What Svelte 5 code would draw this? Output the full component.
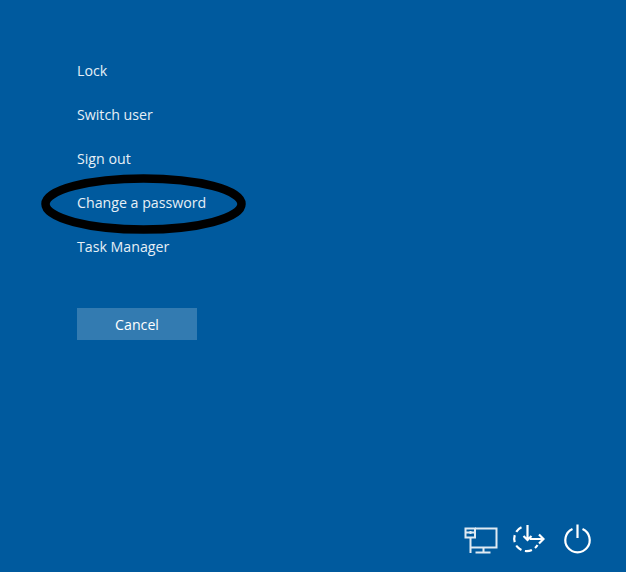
<script>
	const options = ['Lock', 'Switch user', 'Sign out', 'Change a password', 'Task Manager'];
</script>

<div class="screen">
	<nav class="menu">
		{#each options as label (label)}
			<a class="option" href="#top">{label}</a>
		{/each}
		<button class="cancel">Cancel</button>
	</nav>

	<!-- hand drawn annotation around the password option -->
	<svg class="circle" viewBox="0 0 205 60" fill="none" stroke="#000" stroke-width="8.500">
		<ellipse cx="102.500" cy="30" rx="98" ry="25.500" />
	</svg>

	<div class="tray">
		<svg class="net" viewBox="0 0 34 32" fill="none" stroke="#dfeaf3" stroke-width="2">
			<path d="M11 4.500H32.500V23.500H6.500" />
			<path d="M1.500 4.500h9.500v9H1.500zM1.500 8.500h9.500M6.500 7v3M6.500 13.500V29M19.500 23.500v5M11.500 28.500h15" />
		</svg>
		<svg class="ease" viewBox="0 0 33 32" fill="none" stroke="#fff" stroke-width="2.200">
			<path d="M9.500 3.300A12.500 12.500 0 1 0 25.500 21" stroke-dasharray="7 3.600" />
			<path d="M15.500 1v15M11.500 12l4 4 4-4M18 15H31M27 10.500l4.500 4.500-4.500 4.500" />
		</svg>
		<svg class="power" viewBox="0 0 29 32" fill="none" stroke="#fff" stroke-width="2.200">
			<path d="M14.500 0.500V14" />
			<path d="M9.500 5A12.200 12.200 0 1 0 19.500 5" />
		</svg>
	</div>
</div>

<style>
	:global(body) {
		margin: 0;
	}

	.screen {
		position: relative;
		display: flex;
		flex-direction: column;
		box-sizing: border-box;
		height: 572px;
		padding: 49px 34px 16px 77px;
		background: #005a9e;
		font-family: 'Open Sans', 'Noto Sans', sans-serif;
		color: #e6eff6;
		overflow: hidden;
	}

	.menu {
		display: flex;
		flex-direction: column;
		align-items: flex-start;
	}

	.option {
		height: 44px;
		line-height: 44px;
		font-size: 14.200px;
		color: inherit;
		text-decoration: none;
	}

	.cancel {
		width: 120px;
		height: 32px;
		margin-top: 39px;
		padding: 0;
		border: none;
		background: #337bb1;
		color: #fff;
		font: inherit;
		font-size: 14.200px;
	}

	.circle {
		position: absolute;
		left: 41px;
		top: 174px;
		width: 205px;
		height: 60px;
	}

	.tray {
		display: flex;
		justify-content: flex-end;
		margin-top: auto;
	}

	.net {
		width: 34px;
		height: 32px;
	}

	.ease {
		width: 33px;
		height: 32px;
		margin-left: 14px;
	}

	.power {
		width: 29px;
		height: 32px;
		margin-left: 18px;
	}
</style>
